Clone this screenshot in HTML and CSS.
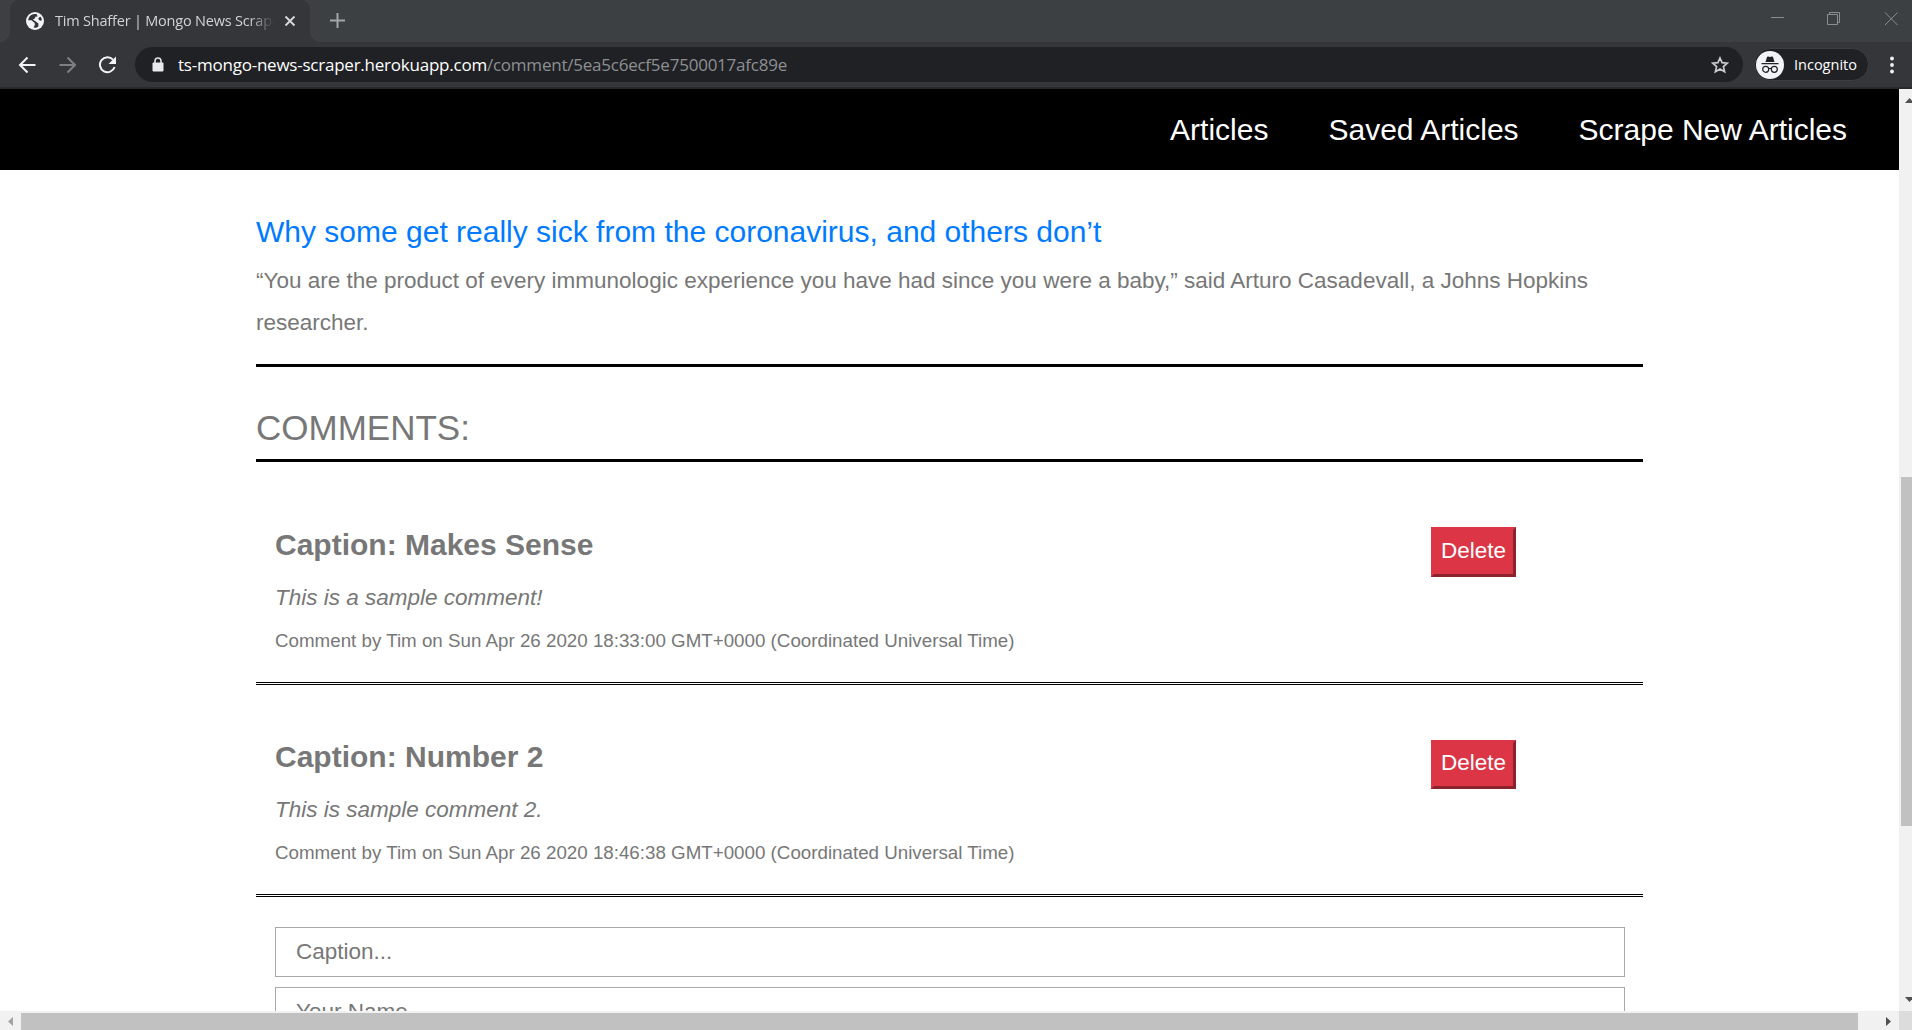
FILE: index.html
```html
<!DOCTYPE html>
<html lang="en">
<head>
<meta charset="utf-8">
<title>Tim Shaffer | Mongo News Scraper</title>
<link rel="stylesheet" href="styles.css">
</head>
<body>
<div class="browser">
  <div class="tabstrip">
    <div class="tab">
      <svg class="favicon" viewBox="0 0 18 18"><circle cx="9" cy="9" r="9" fill="#f1f3f4"/><path d="M6.2 2.4C3.6 3.600 2.200 6 2.200 8.300L5 8.300C6.600 8.300 6.600 10.400 8.400 10.600L9 12.400L7.500 15.600C9.500 16 11.200 15.500 12.400 14.400L12.400 11.400L9.800 9.600L6.800 7.600L8.800 6.600L9.400 4.800L11.600 4.400L10.800 2.300C9.200 1.700 7.600 1.800 6.200 2.400ZM12.300 7.200L14.200 8.800L15.900 8.200C15.800 7 15.300 5.700 14.600 4.800L12.800 5.500Z" fill="#35363a"/></svg>
      <span class="tab-title">Tim Shaffer | Mongo News Scraper</span>
      <svg class="tab-close" viewBox="0 0 12 12"><path d="M1.500 1.500L10.500 10.500M10.500 1.500L1.500 10.500" stroke="#d5d7da" stroke-width="1.900"/></svg>
    </div>
    <svg class="new-tab" viewBox="0 0 15 15"><path d="M7.500 0V15M0 7.500H15" stroke="#a3a6a9" stroke-width="2"/></svg>
    <svg class="window-controls" viewBox="0 0 130 14"><path d="M0 5.500H13M56.500 2.500H66.500V12.500H56.500ZM58.500 2V.5H68.500V10.500H67M114 .5L126.500 13M126.500 .5L114 13" fill="none" stroke="#8b8e90"/></svg>
  </div>
  <div class="toolbar">
    <svg class="nav-icon" viewBox="0 0 18 18"><path d="M17.500 9H2.500M9.500 1.500L2 9L9.500 16.500" fill="none" stroke="#f1f3f4" stroke-width="2"/></svg>
    <svg class="nav-icon" viewBox="0 0 18 18"><path d="M1.500 9H16.500M9.500 1.500L17 9L9.500 16.500" fill="none" stroke="#7d7f83" stroke-width="2"/></svg>
    <svg class="nav-icon" viewBox="0 0 18 18"><path d="M15 3.600A7.500 7.500 0 1 0 16.600 11" fill="none" stroke="#f1f3f4" stroke-width="2"/><path d="M18 .5V8H10.500Z" fill="#f1f3f4"/></svg>
    <div class="address">
      <svg class="lock" viewBox="0 0 12 15"><path d="M3 6V4a3 3 0 0 1 6 0V6" fill="none" stroke="#e0e1e3" stroke-width="1.600"/><rect x=".5" y="5.500" width="11" height="9" rx="1" fill="#e8eaed"/></svg>
      <span class="host">ts-mongo-news-scraper.herokuapp.com</span><span class="path">/comment/5ea5c6ecf5e7500017afc89e</span>
      <svg class="star" viewBox="0 0 18 18"><path d="M9 2L11.100 6.700L16.300 7.200L12.400 10.600L13.600 15.700L9 13L4.400 15.700L5.600 10.600L1.700 7.200L6.900 6.700Z" fill="none" stroke="#c8cacd" stroke-width="1.700"/></svg>
    </div>
    <div class="profile">
      <svg class="incognito" viewBox="0 0 28 28"><circle cx="14" cy="14" r="14" fill="#f1f3f4"/><path d="M9.500 11L11 6Q11.300 5.200 12.200 5.500L14 6L15.800 5.500Q16.700 5.200 17 6L18.500 11ZM5.500 12H22.500V13.200H5.500Z" fill="#202124"/><g fill="none" stroke="#202124" stroke-width="1.200"><circle cx="9.700" cy="18.300" r="3"/><circle cx="18.300" cy="18.300" r="3"/><path d="M12.600 17.800Q14 16.900 15.400 17.800"/></g></svg>
      <span class="profile-name">Incognito</span>
    </div>
    <svg class="menu" viewBox="0 0 4 18"><g fill="#f1f3f4"><circle cx="2" cy="2.500" r="1.900"/><circle cx="2" cy="9" r="1.900"/><circle cx="2" cy="15.500" r="1.900"/></g></svg>
  </div>
</div>
<div class="window">
  <div class="viewport">
    <nav class="navbar">
      <a class="nav-link">Articles</a>
      <a class="nav-link">Saved Articles</a>
      <a class="nav-link">Scrape New Articles</a>
    </nav>
    <main class="container">
      <section class="article">
        <h1 class="article-title">Why some get really sick from the coronavirus, and others don’t</h1>
        <p class="summary">“You are the product of every immunologic experience you have had since you were a baby,” said Arturo Casadevall, a Johns Hopkins researcher.</p>
      </section>
      <h2 class="comments-title">COMMENTS:</h2>
      <article class="comment">
        <div class="comment-text">
          <h3 class="caption">Caption: Makes Sense</h3>
          <p class="body">This is a sample comment!</p>
          <p class="meta">Comment by Tim on Sun Apr 26 2020 18:33:00 GMT+0000 (Coordinated Universal Time)</p>
        </div>
        <button class="delete">Delete</button>
      </article>
      <article class="comment">
        <div class="comment-text">
          <h3 class="caption">Caption: Number 2</h3>
          <p class="body">This is sample comment 2.</p>
          <p class="meta">Comment by Tim on Sun Apr 26 2020 18:46:38 GMT+0000 (Coordinated Universal Time)</p>
        </div>
        <button class="delete">Delete</button>
      </article>
      <form class="comment-form">
        <input class="field" type="text" placeholder="Caption...">
        <input class="field" type="text" placeholder="Your Name...">
      </form>
    </main>
  </div>
  <div class="scroll-y">
    <svg class="arrow-up" viewBox="0 0 9 5"><path d="M0 5L4.500 0L9 5Z" fill="#505050"/></svg>
    <div class="thumb-y"></div>
    <svg class="arrow-down" viewBox="0 0 9 5"><path d="M0 0L4.500 5L9 0Z" fill="#505050"/></svg>
  </div>
  <div class="scroll-x">
    <svg class="arrow-left" viewBox="0 0 5 9"><path d="M5 0L0 4.500L5 9Z" fill="#a3a3a3"/></svg>
    <div class="thumb-x"></div>
    <svg class="arrow-right" viewBox="0 0 5 9"><path d="M0 0L5 4.500L0 9Z" fill="#505050"/></svg>
  </div>
  <div class="corner"></div>
</div>
</body>
</html>
```
FILE: styles.css
```css
* { box-sizing: border-box; }
body {
  margin: 0;
  width: 1912px;
  height: 1030px;
  overflow: hidden;
  display: flex;
  flex-direction: column;
  background: #fff;
  color: #777;
  font-family: "Liberation Sans", Arial, sans-serif;
}
svg { display: block; flex: none; }
h1, h2, h3, p { margin: 0; font-weight: 400; }

/* Browser chrome */
.browser {
  flex: none;
  height: 89px;
  background: #35363a;
  border-bottom: 2px solid #28292c;
  font-family: "Open Sans", "Noto Sans", sans-serif;
}
.tabstrip {
  display: flex;
  height: 42px;
  padding-left: 10px;
  background: #3c4043;
}
.tab {
  position: relative;
  display: flex;
  align-items: center;
  width: 300px;
  height: 42px;
  padding-left: 16px;
  background: #35363a;
  border-radius: 9px 9px 0 0;
}
.tab::before, .tab::after {
  content: "";
  position: absolute;
  bottom: 0;
  width: 10px;
  height: 10px;
}
.tab::before { left: -10px; background: radial-gradient(circle at 0 0, #3c4043 9.500px, #35363a 10px); }
.tab::after { right: -10px; background: radial-gradient(circle at 100% 0, #3c4043 9.500px, #35363a 10px); }
.favicon { width: 18px; height: 18px; }
.tab-title {
  width: 219px;
  margin-left: 11px;
  overflow: hidden;
  white-space: nowrap;
  font-size: 14.500px;
  letter-spacing: -0.200px;
  line-height: 24px;
  color: #d0d2d5;
  -webkit-mask-image: linear-gradient(to right, #000 194px, transparent 219px);
  mask-image: linear-gradient(to right, #000 194px, transparent 219px);
}
.tab-close { width: 12px; height: 12px; margin-left: 10px; }
.new-tab { width: 15px; height: 15px; margin: 13px 0 0 20px; }
.window-controls { width: 130px; height: 14px; margin: 12px 11px 0 auto; }

.toolbar { display: flex; align-items: center; height: 45px; padding-left: 18px; }
.nav-icon { width: 18px; height: 18px; margin-right: 22px; }
.address {
  display: flex;
  align-items: center;
  width: 1608px;
  height: 35px;
  margin-left: -3px;
  padding: 0 14px 0 17px;
  border-radius: 18px;
  background: #202124;
  font-size: 17px;
  letter-spacing: -0.230px;
}
.lock { width: 12px; height: 15px; margin-right: 14px; }
.host { color: #fff; }
.path { color: #8d9093; }
.star { width: 18px; height: 18px; margin-left: auto; }
.profile {
  display: flex;
  align-items: center;
  width: 115px;
  height: 33px;
  margin-left: 11px;
  padding-left: 1px;
  border: 1px solid #3d3e42;
  border-radius: 17px;
  background: #202124;
}
.incognito { width: 28px; height: 28px; }
.profile-name { margin-left: 10px; font-size: 14.500px; color: #fff; }
.menu { width: 4px; height: 18px; margin-left: 21px; }

/* Page and its scrollbars */
.window {
  flex: none;
  display: grid;
  grid-template: 922px 19px / 1899px 13px;
}
.viewport { overflow: hidden; }
.navbar {
  display: flex;
  justify-content: flex-end;
  height: 81px;
  padding-right: 52px;
  background: #000;
  font-size: 30px;
  line-height: 82px;
  color: #fff;
}
.nav-link { margin-left: 60px; }
.container { width: 1387px; margin-left: 256px; }
.article { height: 197px; padding-top: 44px; border-bottom: 3px solid #000; }
.article-title { font-size: 30px; line-height: 36px; color: #007bff; }
.summary { margin-top: 10px; font-size: 22.500px; line-height: 42px; }
.comments-title { height: 95px; padding-top: 40px; border-bottom: 3px solid #000; font-size: 35px; line-height: 42px; }
.comment {
  display: flex;
  justify-content: space-between;
  height: 223px;
  padding: 65px 127px 0 19px;
  border-bottom: 3px double #000;
}
.comment + .comment { height: 212px; padding-top: 55px; }
.caption { font-size: 30px; line-height: 36px; font-weight: 700; }
.comment + .comment .caption { margin-top: -1px; }
.body { margin-top: 17px; font-size: 22.500px; line-height: 36px; font-style: italic; }
.meta { margin-top: 9px; font-size: 18.750px; line-height: 32px; }
.delete {
  width: 85px;
  height: 50px;
  padding: 0 0 3px;
  border: 3px solid;
  border-color: #dc3545 #8b222c #8b222c #dc3545;
  background: #dc3545;
  color: #fff;
  font: 22.500px "Liberation Sans", Arial, sans-serif;
}
.comment + .comment .delete { height: 49px; padding-bottom: 4px; }
.comment-form { display: flex; flex-direction: column; gap: 10px; padding: 30px 18px 0 19px; }
.field {
  height: 50px;
  padding: 0 20px 1px;
  border: 1px solid #a9a9a9;
  font: 22.500px "Liberation Sans", Arial, sans-serif;
}
.field::placeholder { color: #777; }

.scroll-y { background: #f1f1f1; padding-left: 2px; overflow: hidden; }
.arrow-up { width: 9px; height: 5px; margin: 9px 0 0 4px; }
.thumb-y { height: 349px; margin-top: 374px; background: #c1c1c1; }
.arrow-down { width: 9px; height: 5px; margin: 171px 0 0 4px; }
.scroll-x { display: flex; padding-top: 2px; background: #f1f1f1; }
.arrow-left { width: 5px; height: 9px; margin: 4px 8px 0; }
.thumb-x { width: 1837px; background: #c1c1c1; }
.arrow-right { width: 5px; height: 9px; margin: 4px 0 0 28px; }
.corner { background: #dcdcdc; }
```
